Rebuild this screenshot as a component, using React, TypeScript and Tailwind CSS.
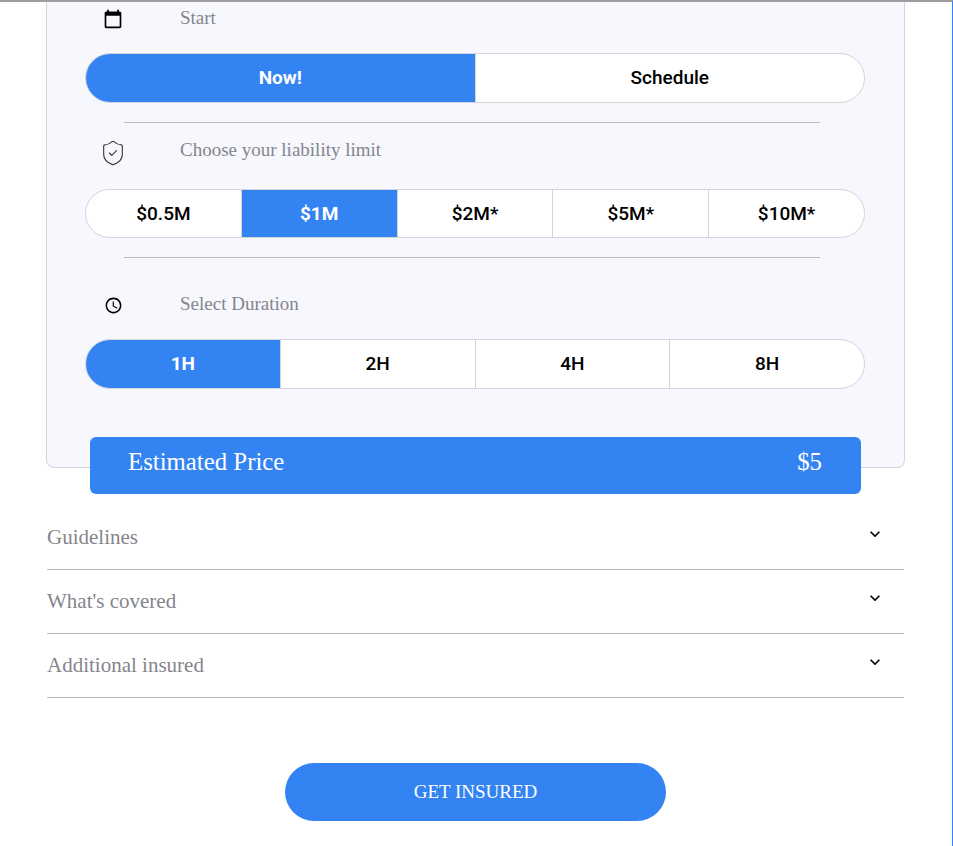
import { MdKeyboardArrowDown, MdOutlineAccessTime } from "react-icons/md";
import { ShieldCheck } from "lucide-react";

const serif = "font-['Liberation_Serif',serif]";

function Segments({ items, active, height, cell = "" }: { items: string[]; active: string; height: string; cell?: string }) {
  return (
    <div className={`ml-[38px] mr-[39px] flex overflow-hidden rounded-full border border-[#d3d3da] bg-white ${height}`}>
      {items.map((item, i) => (
        <div
          key={item}
          className={`flex flex-1 items-center justify-center font-['Roboto',sans-serif] text-[19px] ${cell} ${
            item === active ? "bg-[#3384f2] font-bold text-white" : "font-medium text-black"
          } ${i > 0 ? "border-l border-[#d3d3da]" : ""}`}
        >
          {item}
        </div>
      ))}
    </div>
  );
}

function Label({ icon, text, className }: { icon: React.ReactNode; text: string; className: string }) {
  return (
    <div className={`flex items-center pl-[55px] ${className}`}>
      <div className="flex w-[22px] justify-center">{icon}</div>
      <span className={`ml-[56px] text-[19px] text-[#85858c] ${serif}`}>{text}</span>
    </div>
  );
}

function Accordion({ title }: { title: string }) {
  return (
    <div className="flex h-[64px] items-start justify-between border-b border-[#bcbcbc] pt-[16px]">
      <span className={`text-[21px] text-[#85858c] ${serif}`}>{title}</span>
      <MdKeyboardArrowDown className="mr-[19px] mt-[2px] text-black" size={20} />
    </div>
  );
}

function CalendarIcon() {
  return (
    <svg viewBox="0 0 24 24" width="20" height="20" className="mt-[1px] text-black" fill="currentColor">
      <path d="M20 3h-1V1h-2v2H7V1H5v2H4c-1.1 0-2 .9-2 2v16c0 1.1.9 2 2 2h16c1.1 0 2-.9 2-2V5c0-1.1-.9-2-2-2zm0 18H4V8h16v13z" />
    </svg>
  );
}

export default function App() {
  return (
    <div className="h-[846px] w-[953px] overflow-hidden border-r border-t-2 border-r-[#3384f2] border-t-[#9d9da3] bg-white">
      <div className="ml-[46px] h-[466px] w-[859px] rounded-b-lg border border-t-0 border-[#d3d3da] bg-[#f7f8fe]">
        <Label className="h-[32px]" icon={<CalendarIcon />} text="Start" />
        <div className="h-[19px]" />
        <Segments items={["Now!", "Schedule"]} active="Now!" height="h-[50px]" />
        <div className="ml-[77px] mr-[84px] mt-[19px] h-px bg-[#bcbcc4]" />
        <Label
          className="h-[54px]"
          icon={<ShieldCheck className="mt-[5px] shrink-0 text-[#3c3c44]" size={28} strokeWidth={1} />}
          text="Choose your liability limit"
        />
        <div className="h-[12px]" />
        <Segments items={["$0.5M", "$1M", "$2M*", "$5M*", "$10M*"]} active="$1M" height="h-[49px]" cell="pt-px" />
        <div className="ml-[77px] mr-[84px] mt-[19px] h-px bg-[#bcbcc4]" />
        <Label
          className="mt-[27px] h-[38px]"
          icon={<MdOutlineAccessTime className="mt-[2px] text-black" size={19} />}
          text="Select Duration"
        />
        <div className="h-[16px]" />
        <Segments items={["1H", "2H", "4H", "8H"]} active="1H" height="h-[50px]" cell="pt-px" />
      </div>
      <div
        className={`relative z-10 ml-[90px] -mt-[31px] flex h-[57px] w-[771px] items-start justify-between rounded-md bg-[#3384f2] pl-[38px] pr-[39px] pt-[11px] text-[24.8px] leading-[28px] text-white ${serif}`}
      >
        <span>Estimated Price</span>
        <span>$5</span>
      </div>
      <div className="ml-[47px] mt-[12px] w-[857px]">
        <Accordion title="Guidelines" />
        <Accordion title="What's covered" />
        <Accordion title="Additional insured" />
      </div>
      <div className="mt-[65px] flex justify-center pr-px">
        <button
          className={`flex h-[58px] w-[381px] items-center justify-center rounded-full bg-[#3384f2] text-[19px] text-white ${serif}`}
        >
          GET INSURED
        </button>
      </div>
    </div>
  );
}
